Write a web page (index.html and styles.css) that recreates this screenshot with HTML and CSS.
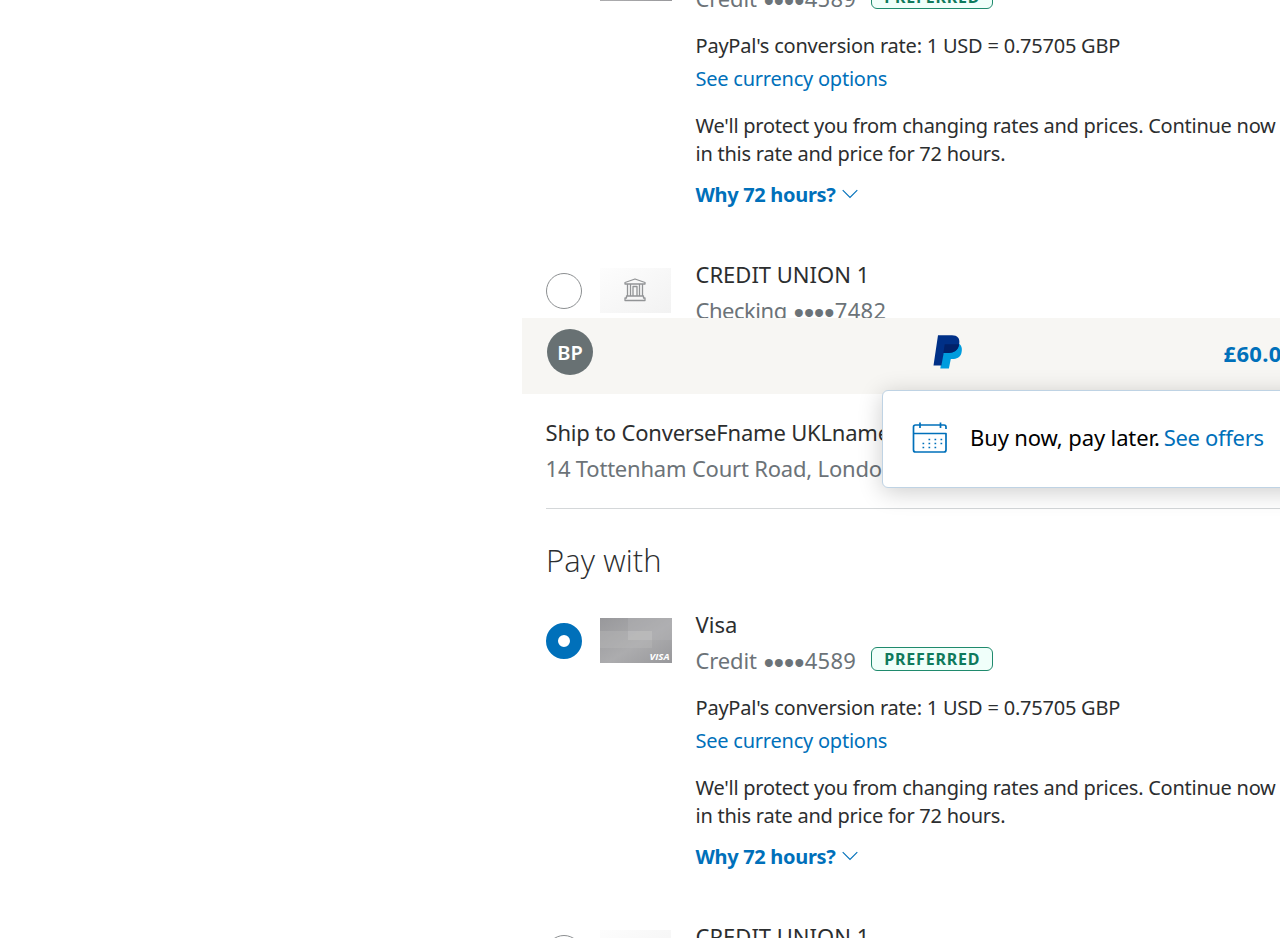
FILE: index.html
```html
<!DOCTYPE html>
<html lang="en">
<head>
<meta charset="utf-8">
<title>PayPal Checkout</title>
<link rel="stylesheet" href="styles.css">
</head>
<body>
<svg width="0" height="0" class="defs" aria-hidden="true">
  <defs>
    <linearGradient id="silver" x1="0" y1="0" x2="1" y2="1"><stop offset="0" stop-color="#98989b"/><stop offset=".55" stop-color="#acacae"/><stop offset="1" stop-color="#98989b"/></linearGradient>
    <linearGradient id="pale" x1="0" y1="0" x2="1" y2="1"><stop offset="0" stop-color="#fdfdfd"/><stop offset="1" stop-color="#f2f2f2"/></linearGradient>
    <symbol id="card" viewBox="0 0 72 45">
      <rect width="72" height="45" fill="url(#silver)"/>
      <path d="M28 0h44v22H28z" fill="#b4b4b6" opacity=".4"/>
      <path d="M0 13h52v17H0z" fill="#b8b8ba" opacity=".4"/>
      <path d="M28 13h24v9H28z" fill="#c2c2c3" opacity=".4"/>
      <text x="49.500" y="42" class="visa" textLength="20" lengthAdjust="spacingAndGlyphs">VISA</text>
    </symbol>
    <symbol id="bank" viewBox="0 0 72 45">
      <rect width="71" height="45" fill="url(#pale)"/>
      <g fill="none" stroke="#929496" stroke-width="1.300" stroke-linejoin="round"><path d="M25 16v-1.500l10-3.500 10 3.500V16zM27.500 16v12M30.500 16v12M33 28V18.500h4V28M39.500 16v12M42.500 16v12M26.500 28h17v2h1.500v2.500H25V30h1.500z"/></g>
    </symbol>
    <symbol id="chevron" viewBox="0 0 16 10"><path d="M.7 1.200 8 8.500l7.300-7.300" fill="none" stroke="#0070ba" stroke-width="1.100"/></symbol>
  </defs>
</svg>

<div class="page">
  <section class="panel previous">
    <div class="option">
      <span class="radio on"></span>
      <svg class="thumb"><use href="#card"/></svg>
      <div class="info">
        <div class="line"><span>Visa</span></div>
        <div class="line muted"><span class="t-credit">Credit</span><span class="dots">••••</span><span class="t-num">4589</span><span class="badge">PREFERRED</span></div>
        <div class="small rate">PayPal's conversion rate: 1 USD = 0.75705 GBP</div>
        <div class="small currency"><a>See currency options</a></div>
        <div class="small t-protect">We'll protect you from changing rates and prices. Continue now</div>
        <div class="small t-hours">in this rate and price for 72 hours.</div>
        <div class="small why"><a>Why 72 hours?</a><svg class="chevron"><use href="#chevron"/></svg></div>
      </div>
    </div>
    <div class="option">
      <span class="radio"></span>
      <svg class="thumb"><use href="#bank"/></svg>
      <div class="info">
        <div class="line"><span>CREDIT UNION 1</span></div>
        <div class="line muted"><span class="t-checking">Checking</span><span class="dots">••••</span><span class="t-num">7482</span></div>
      </div>
    </div>
  </section>

  <section class="panel current">
    <header class="topbar">
      <span class="avatar">BP</span>
      <svg class="logo" viewBox="0 0 30 36">
        <path d="M25.500 9.500c3.700 2 3.900 6 2.800 10-1.300 4-4.600 5.500-9 5.500h-1.500L15.900 34.500H7.300l2.500-15z" fill="#009cde"/>
        <path d="M5 1.300h14c5.500 0 8 3.200 7.300 8-1 6.500-4.500 9.700-11.300 9.700h-4.300L8.400 31.500H.500z" fill="#003087"/>
        <path d="M11.700 10.200h13.600l.8.600c-1.200 5.600-4.800 8.200-11.100 8.200h-4.600z" fill="#012169"/>
      </svg>
      <span class="total">£60.00</span>
    </header>
    <div class="ship">
      <div class="line"><span class="t-ship">Ship to ConverseFname UKLname</span></div>
      <div class="line muted"><span class="t-ship">14 Tottenham Court Road, London</span></div>
    </div>
    <h2>Pay with</h2>
    <div class="option">
      <span class="radio on"></span>
      <svg class="thumb"><use href="#card"/></svg>
      <div class="info">
        <div class="line"><span>Visa</span></div>
        <div class="line muted"><span class="t-credit">Credit</span><span class="dots">••••</span><span class="t-num">4589</span><span class="badge">PREFERRED</span></div>
        <div class="small rate">PayPal's conversion rate: 1 USD = 0.75705 GBP</div>
        <div class="small currency"><a>See currency options</a></div>
        <div class="small t-protect">We'll protect you from changing rates and prices. Continue now</div>
        <div class="small t-hours">in this rate and price for 72 hours.</div>
        <div class="small why"><a>Why 72 hours?</a><svg class="chevron"><use href="#chevron"/></svg></div>
      </div>
    </div>
    <div class="option">
      <span class="radio"></span>
      <svg class="thumb"><use href="#bank"/></svg>
      <div class="info">
        <div class="line"><span>CREDIT UNION 1</span></div>
      </div>
    </div>
    <aside class="offer">
      <svg class="calendar" viewBox="0 0 36 34">
        <g fill="none" stroke="#0070ba" stroke-width="1.700"><path d="M34 7V5q0-2-2-2H3.500q-2 0-2 2v23q0 2 2 2h28.500q2 0 2-2V11.500H1.500" stroke-linejoin="round"/><path d="M8 .5v5.500M28.500 .5v5.500"/></g>
        <path d="M16.500 17.500h14M10.500 21.500h20M10.500 25.500h14" stroke="#0070ba" stroke-width="1.700" stroke-dasharray="1.700 4.300" fill="none"/>
      </svg>
      <span class="t-buy">Buy now, pay later.</span><a class="t-offers">See offers</a>
    </aside>
  </section>
</div>
</body>
</html>
```

FILE: styles.css
```css
* { box-sizing: border-box; }
html, body { margin: 0; overflow: hidden; }
body { height: 938px; background: #fff; color: #2c2e2f; font-family: "Noto Sans", sans-serif; font-size: 22px; }
.defs { display: block; height: 0; }
.page { width: 1280px; height: 938px; padding-left: 522px; overflow: hidden; }
.panel { overflow: hidden; position: relative; padding-left: 24px; }
.previous { height: 318px; }
.previous .option:first-child { margin-top: -55px; }
.current { height: 620px; }
.option { display: flex; height: 312px; }
.radio { flex: none; width: 36px; height: 36px; margin: 16px 18px 0 0; border: 1px solid #8c8f91; border-radius: 50%; background: #fff; }
.radio.on { border: 12px solid #0070ba; }
.thumb { flex: none; width: 72px; height: 45px; margin: 11px 23.5px 0 0; }
.info { flex: none; }
.visa { font: italic 700 8.5px "Open Sans", sans-serif; fill: #fff; }
.line { display: flex; align-items: center; height: 36px; line-height: 34px; padding-bottom: 2px; white-space: nowrap; }
.muted { color: #6c7378; }
.small { display: flex; align-items: center; height: 28px; font-size: 20px; line-height: 28px; white-space: nowrap; }
.rate { margin-top: 15px; letter-spacing: -.22px; }
.currency { margin: 5px 0 19px; letter-spacing: -.23px; }
.why { margin-top: 13px; font-weight: 700; letter-spacing: -.31px; }
.t-protect { letter-spacing: -.26px; }
.t-hours { letter-spacing: -.24px; }
.t-credit { letter-spacing: -.15px; }
.t-checking { letter-spacing: -.47px; }
.t-num { letter-spacing: .3px; }
a { color: #0070ba; }
.chevron { width: 16px; height: 10px; margin: -2px 0 0 6px; }
.dots { width: 41px; margin: 5px 0 0 7px; font: 29px/30px "Liberation Sans", sans-serif; }
.badge { display: flex; align-items: center; justify-content: center; width: 122px; height: 24px; margin: -2px 0 0 15px; border: 1px solid #1f8a6d; border-radius: 6px; background: #f0fffa; color: #0f7a5c; font-size: 16px; font-weight: 700; letter-spacing: .8px; }
.topbar { display: flex; height: 76px; margin-left: -24px; padding: 11px 0 0 25px; background: #f7f6f3; }
.avatar { flex: none; display: flex; align-items: center; justify-content: center; width: 46px; height: 46px; border-radius: 50%; background: #687173; color: #fff; font-size: 20px; font-weight: 600; }
.logo { flex: none; width: 30px; height: 36px; margin: 5px 0 0 340px; }
.total { margin: 8px 0 0 260.5px; line-height: 32px; color: #0070ba; font-weight: 700; letter-spacing: .3px; }
.ship { height: 115px; padding-top: 21px; border-bottom: 1px solid #d4d7d9; }
.t-ship { letter-spacing: -.2px; margin-left: -.5px; }
h2 { margin: 0; padding-top: 31px; height: 98px; font: 300 31px/40px "Open Sans", sans-serif; letter-spacing: .1px; }
.offer { position: absolute; left: 360px; top: 72px; display: flex; align-items: center; width: 440px; height: 98px; padding-left: 29px; border: 1px solid #bfd3e4; border-radius: 6px; background: #fff; color: #000; white-space: nowrap; line-height: 30px; box-shadow: 0 4px 24px rgba(0, 0, 0, .2); }
.calendar { width: 36px; height: 34px; margin: -1px 22px 0 0; }
.t-buy { letter-spacing: -.12px; margin-top: -5px; }
.t-offers { margin: -5px 0 0 4px; letter-spacing: -.31px; }
```
